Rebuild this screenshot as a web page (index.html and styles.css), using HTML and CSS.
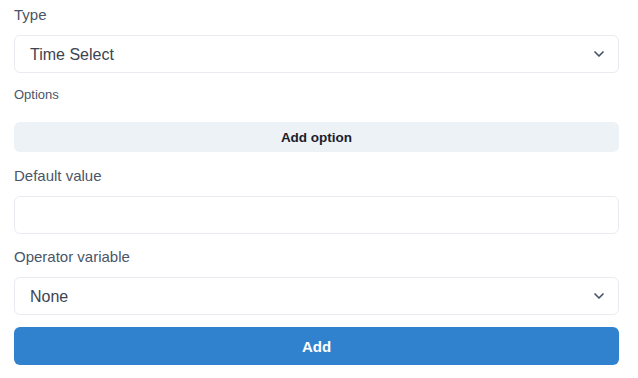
FILE: index.html
```html
<!DOCTYPE html>
<html lang="en">
<head>
    <meta charset="UTF-8">
    <meta name="viewport" content="width=device-width, initial-scale=1.0">
    <title>Add field</title>
    <link rel="stylesheet" href="styles.css">
</head>
<body>
    <form class="form">
        <div class="group">
            <label class="label" for="type">Type</label>
            <div class="select-wrap">
                <select id="type" class="field">
                    <option>Time Select</option>
                </select>
                <svg class="chevron" viewBox="0 0 24 24" width="16" height="16"><path d="M6 9l6 6 6-6" fill="none" stroke="currentColor" stroke-width="2.6" stroke-linecap="round" stroke-linejoin="round"/></svg>
            </div>
        </div>

        <div class="group options">
            <div class="label small">Options</div>
            <button type="button" class="btn-light">Add option</button>
        </div>

        <div class="group">
            <label class="label" for="default">Default value</label>
            <input id="default" class="field" type="text">
        </div>

        <div class="group">
            <label class="label" for="operator">Operator variable</label>
            <div class="select-wrap">
                <select id="operator" class="field">
                    <option>None</option>
                </select>
                <svg class="chevron" viewBox="0 0 24 24" width="16" height="16"><path d="M6 9l6 6 6-6" fill="none" stroke="currentColor" stroke-width="2.6" stroke-linecap="round" stroke-linejoin="round"/></svg>
            </div>
        </div>

        <button type="button" class="btn-primary">Add</button>
    </form>
</body>
</html>
```

FILE: styles.css
```css
body {
    margin: 0;
    padding: 4px 19px 0 14px;
    background: #fff;
    font-family: "Liberation Sans", Arial, sans-serif;
    color: #2d3748;
}
.form {
    width: 605px;
}
.group {
    margin-bottom: 12px;
}
.group.options {
    margin-bottom: 13px;
}
.label {
    display: block;
    font-size: 15px;
    line-height: 22px;
    color: #4a5568;
    margin-bottom: 9px;
}
.label.small {
    font-size: 13px;
    line-height: 20px;
    margin-top: 0;
    margin-bottom: 17px;
}
.field {
    display: block;
    width: 100%;
    height: 38px;
    box-sizing: border-box;
    padding: 0 40px 0 15px;
    border: 1px solid #e8ecf1;
    border-radius: 6px;
    background: #fff;
    font-family: inherit;
    font-size: 16px;
    color: #3d4451;
    -webkit-appearance: none;
    appearance: none;
    outline: none;
}
.select-wrap {
    position: relative;
}
.chevron {
    position: absolute;
    right: 12px;
    top: 11px;
    color: #4a5568;
    pointer-events: none;
}
.btn-light {
    display: block;
    width: 100%;
    height: 30px;
    border: none;
    border-radius: 6px;
    background: #edf2f7;
    font-family: inherit;
    font-size: 13.5px;
    font-weight: bold;
    color: #1a202c;
    cursor: pointer;
}
.btn-primary {
    display: block;
    width: 100%;
    height: 38px;
    border: none;
    border-radius: 6px;
    background: #3182ce;
    font-family: inherit;
    font-size: 15px;
    font-weight: bold;
    color: #fff;
    cursor: pointer;
}
```
